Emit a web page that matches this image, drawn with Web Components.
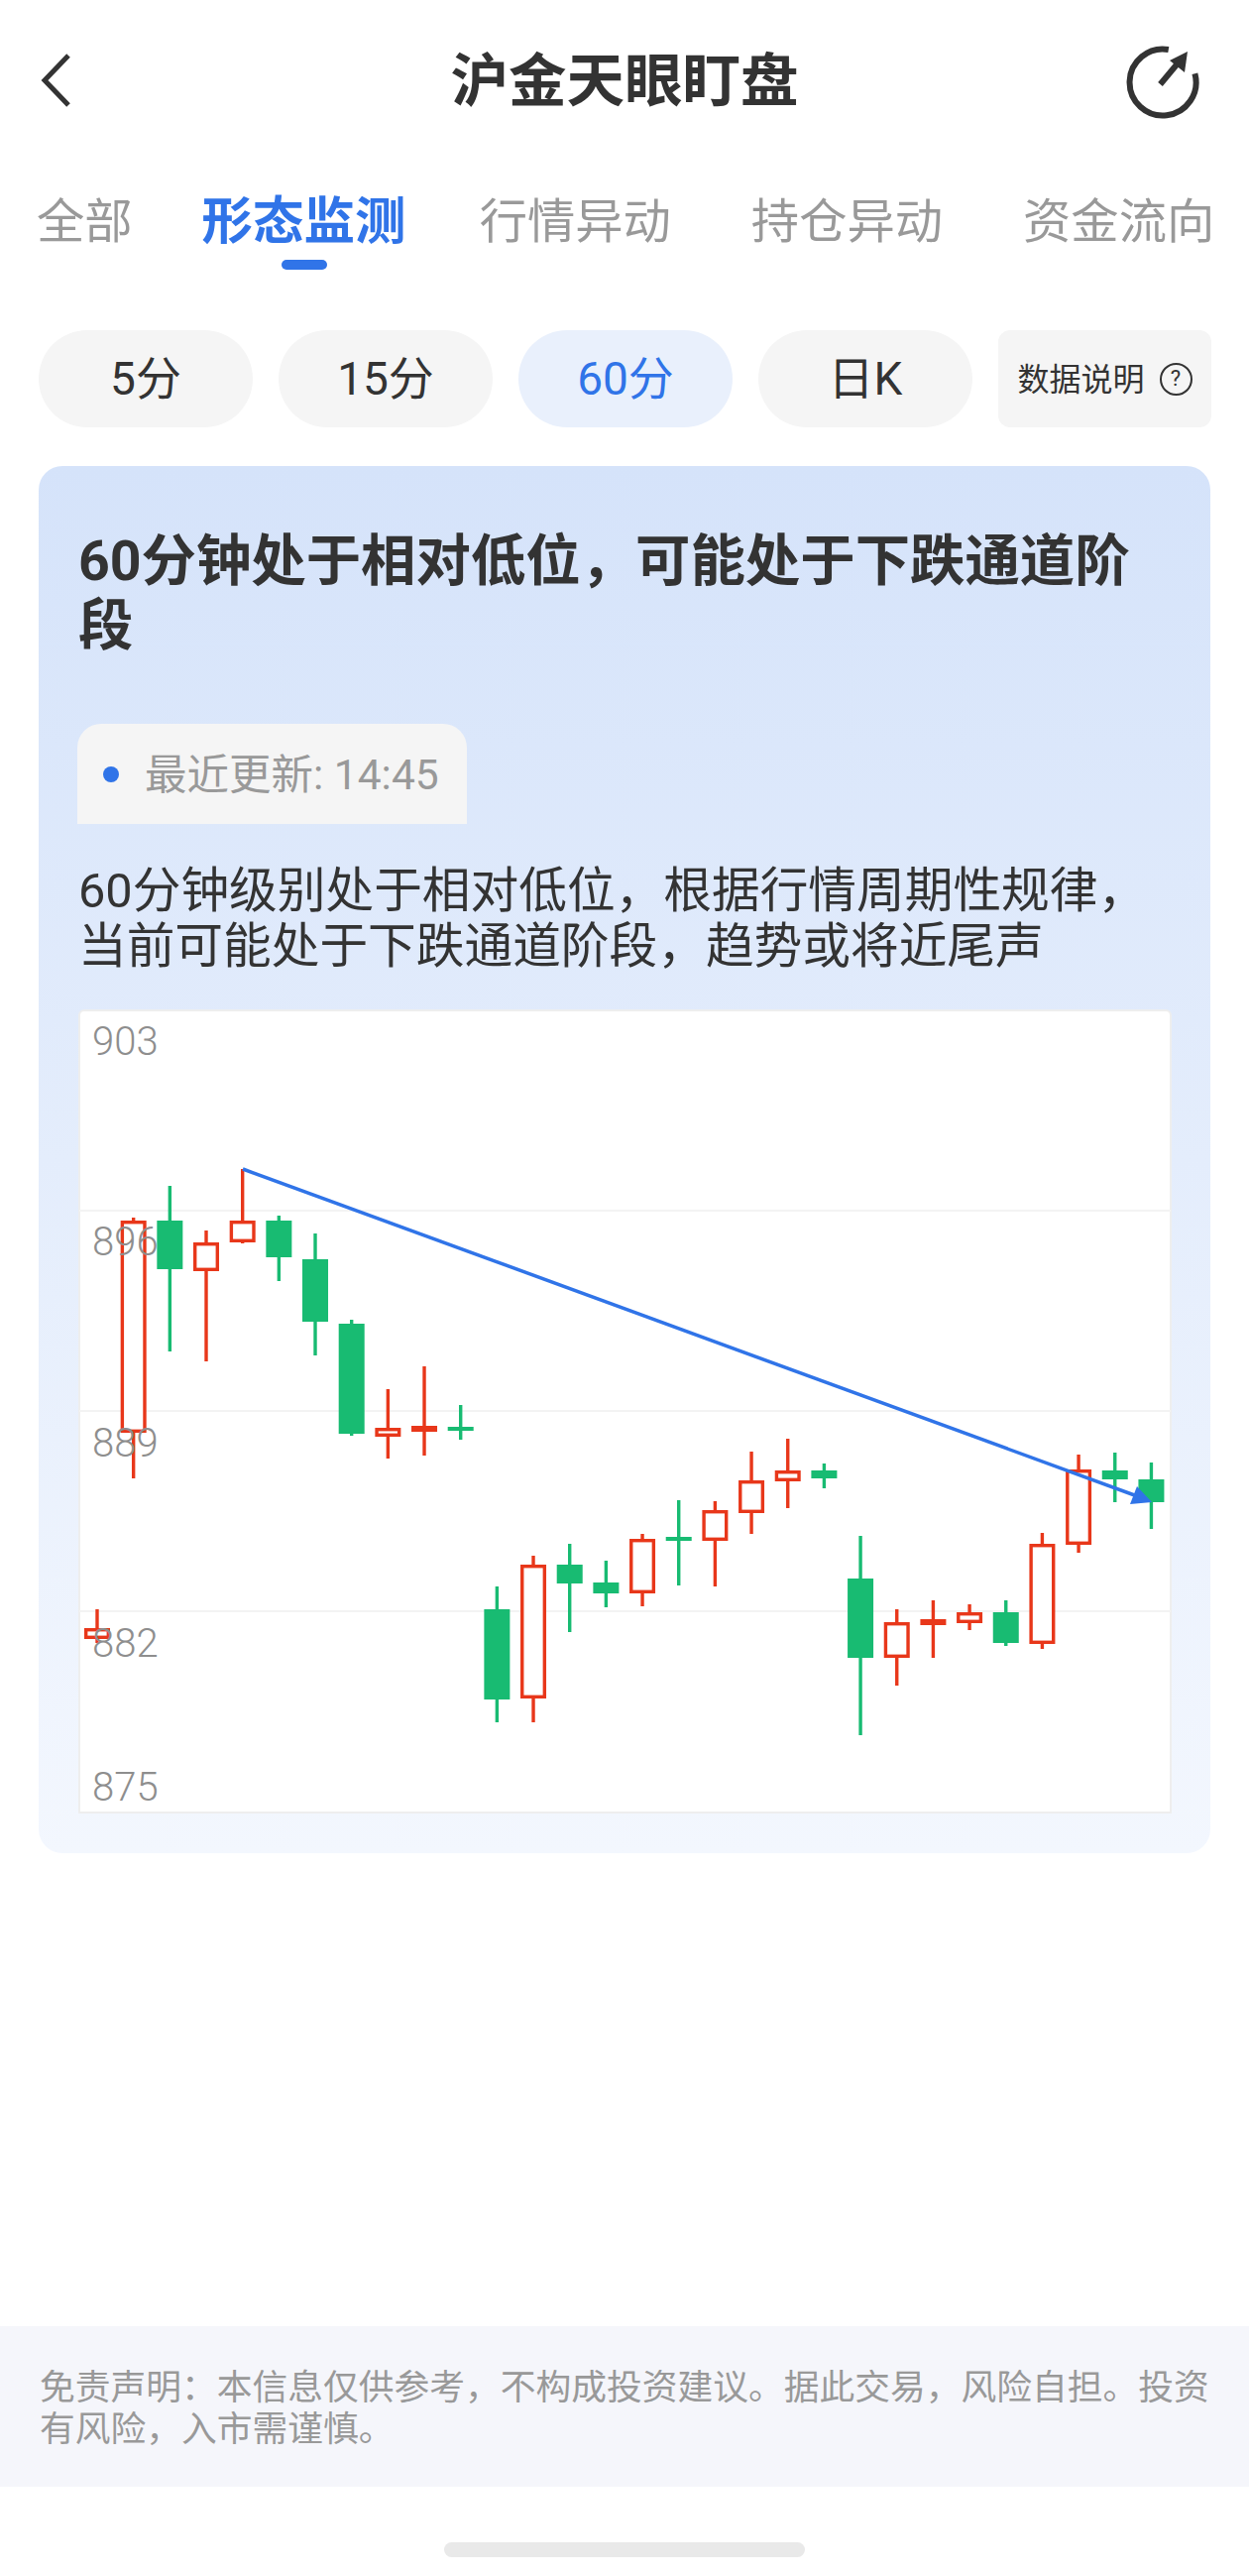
<!DOCTYPE html>
<html lang="zh-CN">
<head>
<meta charset="utf-8">
<title>沪金天眼盯盘</title>
<style>
  html, body { margin: 0; padding: 0; background: #fff; }
  body { font-family: Roboto, "Noto Sans CJK SC", sans-serif; color: #333; }
  watch-page { width: 1260px; height: 2598px; }
</style>
</head>
<body>
<watch-page>
  <top-nav>沪金天眼盯盘</top-nav>
  <tab-bar></tab-bar>
  <period-chips></period-chips>
  <signal-card>
    <span slot="title">60分钟处于相对低位，可能处于下跌通道阶段</span>
    <span slot="time">最近更新: 14:45</span>
    <span slot="desc">60分钟级别处于相对低位，根据行情周期性规律，当前可能处于下跌通道阶段，趋势或将近尾声</span>
    <kline-chart slot="chart"></kline-chart>
  </signal-card>
  <risk-note>免责声明：本信息仅供参考，不构成投资建议。据此交易，风险自担。投资有风险，入市需谨慎。</risk-note>
  <home-bar></home-bar>
</watch-page>

<script>
class WatchPage extends HTMLElement {
  constructor() {
    super();
    this.attachShadow({mode: 'open'}).innerHTML = `
      <style>
        :host { display: flex; flex-direction: column; overflow: hidden; background: #fff; }
      </style>
      <slot></slot>
    `;
  }
}

class TopNav extends HTMLElement {
  constructor() {
    super();
    this.attachShadow({mode: 'open'}).innerHTML = `
      <style>
        :host {
          display: grid;
          grid-template-columns: 1fr auto 1fr;
          align-items: center;
          height: 160px;
          padding: 0 50px;
        }
        .back { margin-left: -9px; margin-top: 2px; }
        .title { font-size: 58.5px; font-weight: 700; color: #333; line-height: 64px; margin-top: 3px; }
        .right { justify-self: end; height: 74px; margin-top: 6px; }
        svg { display: block; }
      </style>
      <svg class="back" width="30" height="54" viewBox="0 0 30 54" fill="none">
        <path d="M28 2 L4 27 L28 52" stroke="#333" stroke-width="5"/>
      </svg>
      <div class="title"><slot></slot></div>
      <div class="right">
        <svg width="74" height="74" viewBox="0 0 74 74" fill="none">
          <path d="M69.4 28.3 A33.5 33.5 0 1 1 42.8 4" stroke="#333" stroke-width="6"/>
          <path d="M34.5 39 L52 18" stroke="#333" stroke-width="6"/>
          <path d="M62 6 L44 15 L59 27 Z" fill="#333"/>
        </svg>
      </div>
    `;
  }
}

class TabBar extends HTMLElement {
  constructor() {
    super();
    const tabs = ['全部', '形态监测', '行情异动', '持仓异动', '资金流向'];
    this.attachShadow({mode: 'open'}).innerHTML = `
      <style>
        :host {
          display: flex;
          gap: 81px;
          height: 173px;
          padding-left: 37px;
          box-sizing: border-box;
        }
        .tab {
          display: flex;
          flex-direction: column;
          align-items: center;
          font-size: 48.3px;
          line-height: 60px;
          height: 60px;
          margin-top: 34px;
          color: #999;
        }
        .on { margin: 34px -7px 0 -11px; font-size: 51.5px; font-weight: 700; color: #3074e8; }
        .on::after {
          content: '';
          width: 46px;
          height: 10px;
          margin-top: 8px;
          flex: none;
          border-radius: 5px;
          background: #3074e8;
        }
      </style>
      ${tabs.map(t => `<div class="tab ${t === '形态监测' ? 'on' : ''}">${t}</div>`).join('')}
    `;
  }
}

class PeriodChips extends HTMLElement {
  constructor() {
    super();
    const items = ['5分', '15分', '60分', '日K'];
    this.attachShadow({mode: 'open'}).innerHTML = `
      <style>
        :host {
          display: flex;
          gap: 26px;
          padding: 0 38px 0 39px;
        }
        .chip {
          display: flex;
          align-items: center;
          justify-content: center;
          box-sizing: border-box;
          width: 216px;
          height: 98px;
          padding-bottom: 8px;
          border-radius: 49px;
          background: #f5f5f5;
          color: #333;
          font-size: 46px;
        }
        .on { background: #e9f0fc; color: #3074e8; }
        .info {
          display: flex;
          align-items: center;
          justify-content: center;
          box-sizing: border-box;
          gap: 15px;
          width: 215px;
          height: 98px;
          padding-bottom: 5px;
          border-radius: 12px;
          background: #f5f5f5;
          color: #333;
          font-size: 32px;
        }
        .q {
          display: flex;
          align-items: center;
          justify-content: center;
          box-sizing: border-box;
          width: 33px;
          height: 33px;
          margin-top: 5px;
          border: 2.5px solid #333;
          border-radius: 50%;
          font-size: 22px;
          line-height: 1;
        }
      </style>
      ${items.map(t => `<div class="chip ${t === '60分' ? 'on' : ''}">${t}</div>`).join('')}
      <div class="info">数据说明<span class="q">?</span></div>
    `;
  }
}

class SignalCard extends HTMLElement {
  constructor() {
    super();
    this.attachShadow({mode: 'open'}).innerHTML = `
      <style>
        :host {
          display: block;
          box-sizing: border-box;
          width: 1182px;
          height: 1399px;
          margin: 39px 0 0 39px;
          padding: 64px 39px 0 40px;
          border-radius: 24px;
          background: linear-gradient(180deg, #d5e3fa 0%, #f3f7fe 100%);
        }
        .title {
          font-size: 55.4px;
          font-weight: 700;
          line-height: 65px;
          color: #333;
        }
        .time {
          display: flex;
          align-items: center;
          box-sizing: border-box;
          width: 393px;
          height: 101px;
          margin: 66px 0 0 -1px;
          padding-left: 26px;
          border-radius: 24px 24px 0 0;
          background: #f5f5f5;
          color: #999;
          font-size: 42.5px;
        }
        .dot {
          width: 16px;
          height: 16px;
          margin-right: 26px;
          border-radius: 50%;
          background: #3074e8;
        }
        .label { margin-top: -7px; }
        .desc {
          margin-top: 40px;
          font-size: 48.7px;
          line-height: 56px;
          color: #333;
        }
        ::slotted(kline-chart) { margin-top: 35px; }
      </style>
      <div class="title"><slot name="title"></slot></div>
      <div class="time"><span class="dot"></span><span class="label"><slot name="time"></slot></span></div>
      <div class="desc"><slot name="desc"></slot></div>
      <slot name="chart"></slot>
    `;
  }
}

// type, wick top, body top, body bottom, wick bottom (y in page px)
const CANDLES = [
  ['r', 1623, 1642, 1653, 1657],
  ['r', 1228, 1231, 1445, 1491],
  ['g', 1196, 1231, 1280, 1363],
  ['r', 1241, 1253, 1282, 1373],
  ['r', 1179, 1231, 1253, 1254],
  ['g', 1226, 1231, 1268, 1292],
  ['g', 1244, 1270, 1333, 1367],
  ['g', 1331, 1335, 1446, 1448],
  ['r', 1401, 1440, 1449, 1471],
  ['s', 1378, 1438, 1444, 1468],
  ['g', 1417, 1439, 1443, 1452],
  ['g', 1600, 1623, 1714, 1737],
  ['r', 1569, 1578, 1713, 1737],
  ['g', 1557, 1578, 1597, 1646],
  ['g', 1574, 1596, 1607, 1621],
  ['r', 1547, 1552, 1607, 1620],
  ['g', 1513, 1550, 1554, 1599],
  ['r', 1514, 1523, 1554, 1600],
  ['r', 1464, 1493, 1526, 1547],
  ['r', 1451, 1483, 1494, 1521],
  ['g', 1476, 1483, 1491, 1501],
  ['g', 1549, 1592, 1672, 1750],
  ['r', 1623, 1636, 1672, 1700],
  ['s', 1614, 1633, 1639, 1672],
  ['r', 1618, 1626, 1637, 1644],
  ['g', 1614, 1626, 1657, 1660],
  ['r', 1546, 1557, 1658, 1663],
  ['r', 1467, 1482, 1558, 1566],
  ['g', 1465, 1483, 1492, 1515],
  ['g', 1475, 1492, 1515, 1542],
];

class KlineChart extends HTMLElement {
  constructor() {
    super();
    this.attachShadow({mode: 'open'});
    this.render();
  }

  candle([type, top, bodyTop, bodyBottom, bottom], i) {
    const x = 98 + i * 36.67;
    const green = '#18bb72';
    const red = '#e8371a';
    const color = type === 'g' ? green : red;
    const wick = `<path d="M${x} ${top}V${bottom}" stroke="${color}" stroke-width="3.4"/>`;
    if (type === 'r') {
      return wick + `<rect x="${x - 11.3}" y="${bodyTop + 1.7}" width="22.6" height="${bodyBottom - bodyTop - 3.4}" fill="#fff" stroke="${color}" stroke-width="3.4"/>`;
    }
    return wick + `<rect x="${x - 13}" y="${bodyTop}" width="26" height="${bodyBottom - bodyTop}" fill="${color}"/>`;
  }

  render() {
    const labels = [['903', 1051], ['896', 1253], ['889', 1456], ['882', 1658], ['875', 1803]];
    this.shadowRoot.innerHTML = `
      <style>
        :host {
          display: block;
          position: relative;
          box-sizing: border-box;
          width: 1103px;
          height: 811px;
          background: #fff;
          border: 2px solid #eee;
          border-radius: 6px 6px 0 0;
        }
        svg { display: block; position: absolute; left: -2px; top: -2px; }
        span {
          position: absolute;
          left: 12px;
          font-size: 40px;
          font-weight: 300;
          line-height: 44px;
          color: #8e8e8e;
        }
      </style>
      <svg width="1103" height="811" viewBox="79 1018 1103 811" fill="none">
        <path d="M80 1221H1181M80 1423H1181M80 1625H1181" stroke="#f3f3f3" stroke-width="2"/>
        ${CANDLES.map((c, i) => this.candle(c, i)).join('')}
        <path d="M245 1179L1150 1510" stroke="#3074e8" stroke-width="3.5"/>
        <path d="M1162 1515L1140 1517L1147 1499Z" fill="#3074e8"/>
      </svg>
      ${labels.map(([t, y]) => `<span style="top:${y - 1018 - 24}px">${t}</span>`).join('')}
    `;
  }
}

class RiskNote extends HTMLElement {
  constructor() {
    super();
    this.attachShadow({mode: 'open'}).innerHTML = `
      <style>
        :host {
          display: block;
          box-sizing: border-box;
          height: 162px;
          margin-top: 477px;
          padding: 41px 30px 0 40px;
          background: #f5f6fb;
          color: #999;
          font-size: 35.75px;
          line-height: 42px;
        }
      </style>
      <slot></slot>
    `;
  }
}

class HomeBar extends HTMLElement {
  constructor() {
    super();
    this.attachShadow({mode: 'open'}).innerHTML = `
      <style>
        :host {
          display: block;
          width: 364px;
          height: 15px;
          margin: 56px 0 0 448px;
          border-radius: 8px;
          background: #e9e9e9;
        }
      </style>
    `;
  }
}

customElements.define('watch-page', WatchPage);
customElements.define('top-nav', TopNav);
customElements.define('tab-bar', TabBar);
customElements.define('period-chips', PeriodChips);
customElements.define('signal-card', SignalCard);
customElements.define('kline-chart', KlineChart);
customElements.define('risk-note', RiskNote);
customElements.define('home-bar', HomeBar);
</script>
</body>
</html>
